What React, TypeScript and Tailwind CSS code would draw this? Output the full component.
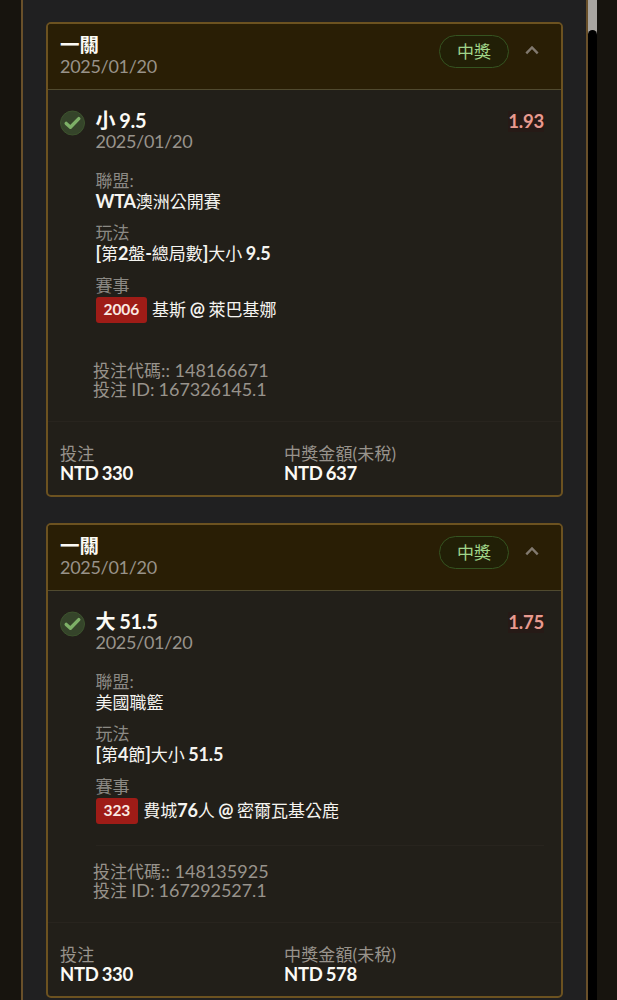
import { Fragment } from "react";
import clsx from "clsx";

interface Bet {
  title: string;
  date: string;
  status: string;
  pick: string;
  pickDate: string;
  odds: string;
  league: string;
  market: string;
  eventId: string;
  event: string;
  code: string;
  betId: string;
  stake: string;
  payout: string;
  divided: boolean;
}

const bets: Bet[] = [
  {
    title: "一關",
    date: "2025/01/20",
    status: "中獎",
    pick: "小 9.5",
    pickDate: "2025/01/20",
    odds: "1.93",
    league: "WTA澳洲公開賽",
    market: "[第2盤-總局數]大小 9.5",
    eventId: "2006",
    event: "基斯 @ 萊巴基娜",
    code: "148166671",
    betId: "167326145.1",
    stake: "NTD 330",
    payout: "NTD 637",
    divided: false,
  },
  {
    title: "一關",
    date: "2025/01/20",
    status: "中獎",
    pick: "大 51.5",
    pickDate: "2025/01/20",
    odds: "1.75",
    league: "美國職籃",
    market: "[第4節]大小 51.5",
    eventId: "323",
    event: "費城76人 @ 密爾瓦基公鹿",
    code: "148135925",
    betId: "167292527.1",
    stake: "NTD 330",
    payout: "NTD 578",
    divided: true,
  },
];

// latin runs are heavier than the chinese text around them
const MixedText = ({ text }: { text: string }) => (
  <>
    {text.split(/([\x20-\x7e]+)/).map((part, i) =>
      i % 2 ? (
        <span
          key={i}
          className="font-bold text-[18px] tracking-[-0.2px] [word-spacing:-0.5px]"
        >
          {part}
        </span>
      ) : (
        <Fragment key={i}>{part}</Fragment>
      )
    )}
  </>
);

const CheckBadge = () => (
  <svg viewBox="0 0 26 26" className="w-[26px] h-[26px] -mt-px shrink-0" fill="none">
    <circle cx="12.5" cy="13" r="12" fill="#35442a" stroke="#3d532e" />
    <path
      d="M6.2 13.4 10.4 17.2 18.8 8.6"
      stroke="#7db067"
      strokeWidth="3.4"
      strokeLinecap="round"
      strokeLinejoin="round"
    />
  </svg>
);

const Field = ({ label, value }: { label: string; value: string }) => (
  <div>
    <p className="text-[#8b8984]">{label}</p>
    <p className="text-[#f5f4f0]">
      <MixedText text={value} />
    </p>
  </div>
);

const Amount = ({ label, value }: { label: string; value: string }) => (
  <div className="w-[224px]">
    <p className="tracking-[0.15px] text-[#98938c]">{label}</p>
    <p className="font-bold text-[18.5px] tracking-[-0.35px] [word-spacing:-0.8px] text-[#fbfaf5]">
      {value}
    </p>
  </div>
);

const BetCard = ({ bet }: { bet: Bet }) => (
  <article className="h-[475px] shrink-0 flex flex-col rounded-[5px] border-2 border-[#6c5220] bg-[#221f19] overflow-hidden">
    <header className="h-[66px] shrink-0 flex items-start justify-between border-b border-[#504a2f] bg-[#291e05] pl-3 pr-[22px] pt-[10px]">
      <div>
        <h2 className="font-bold text-[19.5px] text-[#fbfaf5]">{bet.title}</h2>
        <p className="mt-px text-[18px] tracking-[-0.3px] text-[#989289]">{bet.date}</p>
      </div>
      <div className="flex items-center gap-4 mt-px">
        <span className="w-[70px] h-[33px] flex items-center justify-center rounded-full border border-[#355421] bg-[#211f06] text-[#a0d58a]">
          {bet.status}
        </span>
        <svg viewBox="0 0 14 10" className="w-[14px] h-[10px] mb-[3px]" fill="none">
          <path d="M1.3 8.3 7 2.5 12.7 8.3" stroke="#81796f" strokeWidth="2.4" />
        </svg>
      </div>
    </header>

    <section className="h-[332px] shrink-0 flex pl-3 pr-[17px] pt-[21px] gap-[9.5px] border-b border-[#28241e]">
      <CheckBadge />
      <div className="flex-1 -mt-[2px]">
        <div className="flex items-start justify-between pt-px">
          <h3 className="font-bold text-[20px] tracking-[-0.25px] [word-spacing:-0.7px] text-[#fbfaf5]">
            {bet.pick}
          </h3>
          <span className="mt-px font-bold text-[18.5px] tracking-[-0.2px] text-[#e99a8f] bg-[#2a1814]/60">
            {bet.odds}
          </span>
        </div>
        <p className="-mt-px text-[18px] tracking-[-0.3px] text-[#98938c]">
          {bet.pickDate}
        </p>

        <div className="flex flex-col gap-[10.5px] mt-[17.5px]">
          <Field label="聯盟:" value={bet.league} />
          <Field label="玩法" value={bet.market} />
          <div>
            <p className="text-[#8b8984]">賽事</p>
            <div className="flex items-center gap-[5px] mt-px">
              <span className="h-[26px] px-2 flex items-center rounded-[3px] bg-[#9f1c17] font-bold text-[15.5px] tracking-[-0.1px] text-[#fae9e2]">
                {bet.eventId}
              </span>
              <span className="text-[#f5f4f0]">
                <MixedText text={bet.event} />
              </span>
            </div>
          </div>
        </div>

        <div
          className={clsx(
            "mt-[21px] border-t pt-4",
            bet.divided ? "border-[#28241e]" : "border-transparent"
          )}
        >
          <div className="-ml-[2.5px] leading-[19.5px] text-[#98938c]">
            <p>
              投注代碼<span className="text-[18px]">:: {bet.code}</span>
            </p>
            <p>
              投注
              <span className="text-[18px] tracking-[-0.05px] [word-spacing:-0.3px]">
                {" "}
                ID: {bet.betId}
              </span>
            </p>
          </div>
        </div>
      </div>
    </section>

    <footer className="flex pl-3 pt-[22px] leading-[19.5px]">
      <Amount label="投注" value={bet.stake} />
      <Amount label="中獎金額(未稅)" value={bet.payout} />
    </footer>
  </article>
);

export default function App() {
  return (
    <div
      lang="zh-Hant"
      className="w-full h-[1000px] overflow-hidden flex bg-[#17140e] pl-[21px] font-[Lato,'Noto_Sans_CJK_TC',sans-serif] text-[17px] leading-[21px]"
    >
      <main className="w-[567px] shrink-0 flex flex-col gap-[26px] border-x-2 border-[#69502a] bg-[#202021] px-[23px] pt-[22px]">
        {bets.map((bet) => (
          <BetCard key={bet.betId} bet={bet} />
        ))}
      </main>
      <div className="w-[9px] shrink-0 bg-[linear-gradient(#a9a6a1_36px,#000_36px)] pt-[30px]">
        <div className="h-full rounded-t-full bg-black" />
      </div>
    </div>
  );
}
